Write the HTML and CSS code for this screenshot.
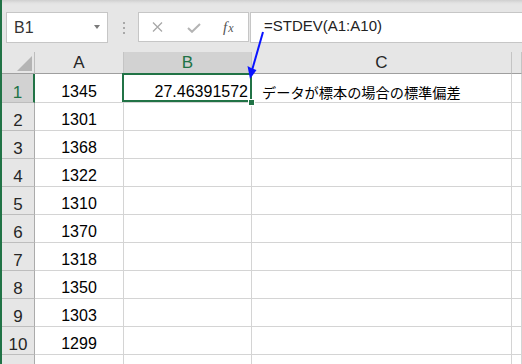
FILE: index.html
```html
<!DOCTYPE html>
<html lang="ja">
<head>
    <meta charset="UTF-8">
    <title>STDEV - Excel</title>
    <link rel="stylesheet" href="styles.css">
</head>
<body>

    <div class="excel">

        <div class="formula-bar">
            <div class="name-box">
                <span>B1</span>
                <span class="caret"></span>
            </div>
            <div class="grip"><i></i><i></i><i></i></div>
            <div class="fx-buttons">
                <span class="btn cancel">
                    <svg width="11" height="10" viewBox="0 0 11 10"><path d="M1 0.5 L10 9.5 M10 0.5 L1 9.5" stroke="#a8a8a8" stroke-width="1.3" fill="none"/></svg>
                </span>
                <span class="btn enter">
                    <svg width="14" height="10" viewBox="0 0 14 10"><path d="M1 5 L5 8.8 L13 1" stroke="#b4b4b4" stroke-width="2" fill="none"/></svg>
                </span>
                <span class="btn fx">f<small>x</small></span>
            </div>
            <div class="formula-input">=STDEV(A1:A10)</div>
        </div>

        <div class="sheet">
            <div class="corner"><div class="tri"></div></div>
            <div class="col-head">A</div>
            <div class="col-head active">B</div>
            <div class="col-head">C</div>
            <div class="col-head"></div>

            <div class="row-head active">1</div>
            <div class="cell center">1345</div>
            <div class="cell right sel">27.46391572</div>
            <div class="cell note">データが標本の場合の標準偏差</div>
            <div class="cell"></div>

            <div class="row-head">2</div>
            <div class="cell center">1301</div>
            <div class="cell"></div><div class="cell"></div><div class="cell"></div>

            <div class="row-head">3</div>
            <div class="cell center">1368</div>
            <div class="cell"></div><div class="cell"></div><div class="cell"></div>

            <div class="row-head">4</div>
            <div class="cell center">1322</div>
            <div class="cell"></div><div class="cell"></div><div class="cell"></div>

            <div class="row-head">5</div>
            <div class="cell center">1310</div>
            <div class="cell"></div><div class="cell"></div><div class="cell"></div>

            <div class="row-head">6</div>
            <div class="cell center">1370</div>
            <div class="cell"></div><div class="cell"></div><div class="cell"></div>

            <div class="row-head">7</div>
            <div class="cell center">1318</div>
            <div class="cell"></div><div class="cell"></div><div class="cell"></div>

            <div class="row-head">8</div>
            <div class="cell center">1350</div>
            <div class="cell"></div><div class="cell"></div><div class="cell"></div>

            <div class="row-head">9</div>
            <div class="cell center">1303</div>
            <div class="cell"></div><div class="cell"></div><div class="cell"></div>

            <div class="row-head">10</div>
            <div class="cell center">1299</div>
            <div class="cell"></div><div class="cell"></div><div class="cell"></div>

            <div class="row-head">11</div>
            <div class="cell"></div>
            <div class="cell"></div><div class="cell"></div><div class="cell"></div>
        </div>

        <!-- callout arrow from the formula to the cell -->
        <svg class="arrow" width="30" height="70" viewBox="0 0 30 70">
            <line x1="23" y1="8" x2="11.5" y2="48" stroke="#0a14ff" stroke-width="2"/>
            <path d="M10 55 L7.5 42 L12 44.5 L16.5 46 Z" fill="#0a14ff"/>
        </svg>

    </div>

</body>
</html>
```

FILE: styles.css
```css
body {
    margin: 0;
    background-color: #ffffff;
    font-family: "Liberation Sans", Arial, sans-serif;
}

.excel {
    position: relative;
    width: 520px;
    height: 364px;
    overflow: hidden;
    border-left: 2px solid #217346;
}

/* formula bar */

.formula-bar {
    display: flex;
    align-items: flex-start;
    height: 52px;
    box-sizing: border-box;
    padding: 12px 0 0 4px;
    background: linear-gradient(#cfcfcf 0, #e2e2e2 3px, #e6e6e6 5px);
}

.name-box {
    display: flex;
    justify-content: space-between;
    align-items: flex-start;
    width: 102px;
    height: 31px;
    box-sizing: border-box;
    padding: 6px 7px 0 7px;
    background-color: #fff;
    border: 1px solid #c6c6c6;
    font-size: 16px;
    line-height: 18px;
    color: #333;
}

.caret {
    width: 0;
    height: 0;
    margin-top: 6px;
    border-left: 3.5px solid transparent;
    border-right: 3.5px solid transparent;
    border-top: 4px solid #7a7a7a;
}

.grip {
    display: flex;
    flex-direction: column;
    gap: 3px;
    margin: 10px 0 0 15px;
}

.grip i {
    display: block;
    width: 2px;
    height: 2px;
    background-color: #a8a8a8;
}

.fx-buttons {
    display: flex;
    align-items: center;
    width: 111px;
    height: 30px;
    box-sizing: border-box;
    margin-left: 13px;
    padding-left: 13px;
    background-color: #fff;
    border: 1px solid #c6c6c6;
}

.btn {
    display: flex;
}

.cancel {
    width: 35px;
}

.enter {
    width: 36px;
    padding-top: 1px;
}

.fx {
    align-items: baseline;
    font-family: "Liberation Serif", "Times New Roman", serif;
    font-style: italic;
    font-size: 15px;
    color: #555;
}

.fx small {
    font-size: 12px;
    margin-left: 1px;
}

.formula-input {
    flex: 1;
    height: 31px;
    box-sizing: border-box;
    margin-left: 1px;
    padding: 4px 0 0 13px;
    background-color: #fff;
    border: 1px solid #c6c6c6;
    border-right: none;
    font-size: 15px;
    line-height: 18px;
    color: #222;
}

/* grid */

.sheet {
    display: grid;
    grid-template-columns: 33px 89px 128px 260px 10px;
    grid-template-rows: 22px 29px repeat(10, 28px);
}

.sheet > div {
    box-sizing: border-box;
}

.corner {
    display: flex;
    justify-content: flex-end;
    align-items: flex-end;
    padding: 0 2px 2px 0;
    background-color: #e6e6e6;
    border-right: 1px solid #bdbdbd;
    border-bottom: 1px solid #9f9f9f;
}

.tri {
    width: 15px;
    height: 15px;
    background-color: #b4b4b4;
    clip-path: polygon(100% 0, 100% 100%, 0 100%);
}

.col-head {
    display: flex;
    justify-content: center;
    align-items: center;
    padding-top: 1px;
    background-color: #e6e6e6;
    border-right: 1px solid #c4c4c4;
    border-bottom: 1px solid #9f9f9f;
    font-size: 17px;
    color: #262626;
}

.col-head.active {
    background-color: #d2d2d2;
    color: #217346;
}

.row-head {
    display: flex;
    justify-content: center;
    align-items: flex-end;
    background-color: #e6e6e6;
    border-right: 1px solid #ababab;
    border-bottom: 1px solid #bdbdbd;
    font-size: 17px;
    line-height: 18px;
    color: #262626;
}

.row-head.active {
    background-color: #d2d2d2;
    border-right: 2px solid #217346;
    color: #217346;
}

.cell {
    display: flex;
    align-items: flex-end;
    padding: 0 3px 1px 3px;
    border-right: 1px solid #d4d4d4;
    border-bottom: 1px solid #d4d4d4;
    font-size: 16px;
    line-height: 18px;
    color: #000;
}

.cell.center {
    justify-content: center;
}

.cell.right {
    justify-content: flex-end;
}

.cell.note {
    padding-left: 10px;
    font-family: "Noto Sans CJK JP", sans-serif;
    font-size: 14.2px;
    white-space: nowrap;
}

/* selected cell B1 */

.sel {
    position: relative;
}

.sel::after {
    content: "";
    position: absolute;
    left: -2px;
    top: -1px;
    right: -1px;
    bottom: 0;
    border: 2px solid #217346;
    z-index: 2;
}

.sel::before {
    content: "";
    position: absolute;
    right: -4px;
    bottom: -4px;
    width: 7px;
    height: 7px;
    box-sizing: border-box;
    background-color: #217346;
    border: 1px solid #fff;
    z-index: 3;
}

.arrow {
    position: absolute;
    left: 238px;
    top: 24px;
    z-index: 5;
}
```
